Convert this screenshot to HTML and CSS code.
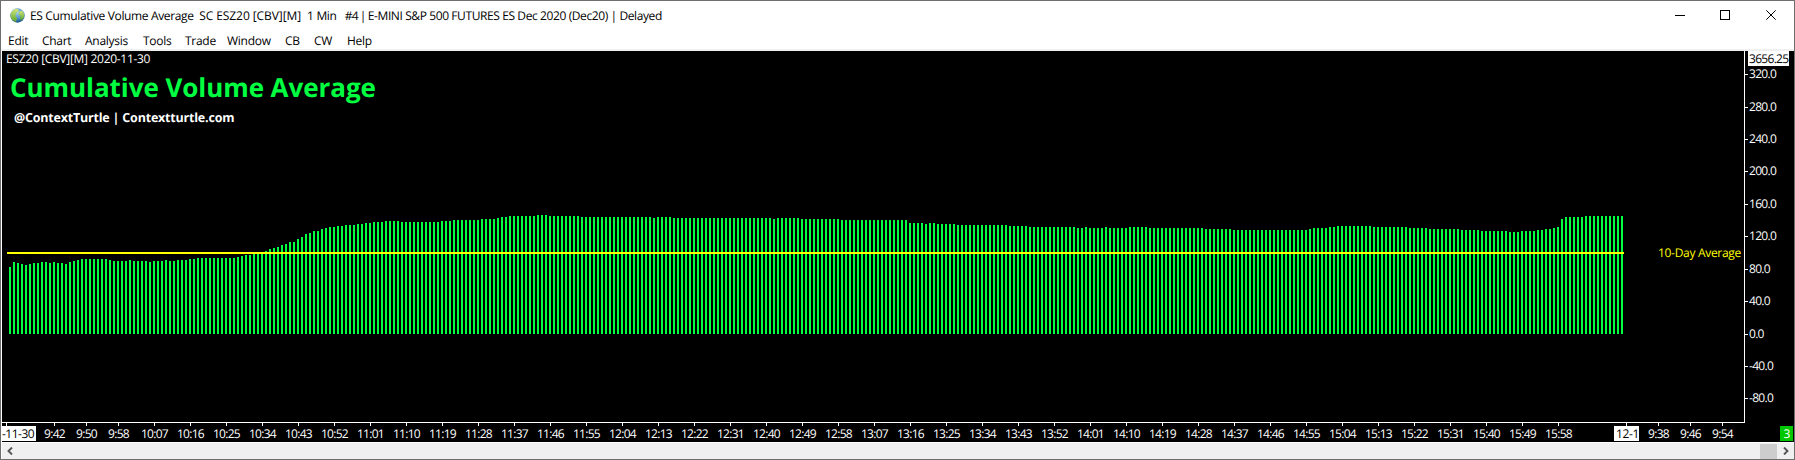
FILE: index.html
```
<!DOCTYPE html>
<html lang="en">
<head>
<meta charset="utf-8">
<title>ES Cumulative Volume Average</title>
<link rel="stylesheet" href="styles.css">
</head>
<body>
<div class="window">
  <header class="titlebar">
    <svg class="globe" width="15" height="15" viewBox="0 0 15 15">
      <defs>
        <radialGradient id="sea" cx=".5" cy=".3" r=".7">
          <stop offset="0" stop-color="#a6d0ea"/><stop offset=".6" stop-color="#4a90c4"/><stop offset="1" stop-color="#164f80"/>
        </radialGradient>
        <linearGradient id="land" x1="0" y1="0" x2="0" y2="1">
          <stop offset="0" stop-color="#d3e67c"/><stop offset="1" stop-color="#5aa52c"/>
        </linearGradient>
      </defs>
      <circle cx="7.5" cy="7.5" r="7.2" fill="url(#sea)"/>
      <path d="M1 5Q3 1 7 .8L9 2 8 4 6 5 5.500 8 7 10 6 14Q1 12 .6 8Z" fill="url(#land)"/>
      <path d="M9 4L12 2.500 14 5.500 14 9 12 12 10 11 10.500 8 8.500 6.500Z" fill="url(#land)"/>
    </svg>
    <h1 class="caption">ES Cumulative Volume Average  <span class="contract">SC ESZ20 [CBV][M]  </span>1 Min   <span class="number">#4 | </span><span class="product">E-MINI S&amp;P 500 FUTURES ES Dec 2020 (Dec20) | Delayed</span></h1>
    <svg class="controls" width="103" height="11" viewBox="0 0 103 11" fill="none" stroke="#000">
      <path d="M0 5.500H10"/>
      <rect x="45.500" y=".5" width="9" height="9"/>
      <path d="M91.300 .3L100.700 9.700M100.700 .3L91.300 9.700"/>
    </svg>
  </header>
  <nav class="menu">
    <span>Edit</span><span>Chart</span><span>Analysis</span><span>Tools</span><span>Trade</span><span>Window</span><span>CB</span><span>CW</span><span>Help</span>
  </nav>
  <main class="chart">
    <section class="plot">
      <div class="symbol">ESZ20 [CBV][M] 2020-11-30</div>
      <h2 class="heading">Cumulative Volume Average</h2>
      <div class="credit">@ContextTurtle | Contextturtle.com</div>
      <div class="bars" id="bars"></div>
      <div class="average-line"></div>
      <div class="average-label">10-Day Average</div>
    </section>
    <aside class="scale" id="scale">
      <span class="last-price">3656.25</span>
    </aside>
    <div class="times" id="times">
      <span class="date first">-11-30</span>
      <span class="date second">12-1</span>
      <span class="badge">3</span>
    </div>
  </main>
  <footer class="scrollbar">
    <svg width="6" height="8" viewBox="0 0 6 8" fill="none" stroke="#555" stroke-width="1.900"><path d="M5 .5L1.500 4 5 7.500"/></svg>
    <span class="thumb"></span>
    <svg width="6" height="8" viewBox="0 0 6 8" fill="none" stroke="#555" stroke-width="1.900"><path d="M1 .5L4.500 4 1 7.500"/></svg>
  </footer>
</div>
<script src="chart.js"></script>
</body>
</html>
```
FILE: styles.css
```
* { box-sizing: border-box; }
body { margin: 0; background: #fff; overflow: hidden; }
.window {
  width: 1795px; height: 460px;
  display: grid; grid-template-rows: 30px 20px 391px 17px;
  border: 1px solid #6e6e6e;
  background: #fff; color: #000;
  font: 12px/16px "Open Sans", "Noto Sans", sans-serif;
  text-rendering: geometricPrecision;
}
.titlebar { display: flex; align-items: flex-start; padding: 7px 16px 0 9px; }
.globe { flex: none; margin-right: 5px; }
.caption { margin: 0; font-size: 12px; font-weight: 400; line-height: 16px; white-space: pre; flex: 1; letter-spacing: -.35px; }
.contract { letter-spacing: -.08px; }
.number { letter-spacing: -.9px; }
.product { letter-spacing: -.4px; }
.controls { flex: none; margin-top: 2px; }
.menu {
  display: grid; grid-template-columns: 34px 43px 58px 42px 42px 58px 29px 33px 60px;
  padding: 2px 0 0 7px; border-bottom: 2px solid #f0f0f0; line-height: 16px; letter-spacing: -.28px;
}
.chart {
  display: grid; grid-template: 372px 19px / 1743px 49px;
  margin-left: 1px; background: #000; color: #fff;
}
.plot { position: relative; border: solid #fff; border-width: 0 1px 1px 0; overflow: hidden; }
.symbol { padding-left: 4px; letter-spacing: -.3px; }
.heading { margin: 0; padding: 3px 0 0 8px; font: 700 26px/34px "Open Sans", sans-serif; letter-spacing: -.06px; color: #00ff40; white-space: nowrap; }
.credit { padding: 6px 0 0 12px; font-size: 12.5px; font-weight: 700; letter-spacing: -.2px; }
.bars { position: absolute; left: 7px; top: 83px; height: 200px; display: flex; align-items: flex-end; gap: 2px; }
.bar { flex: none; width: 2px; background: #00ff40; }
.average-line { position: absolute; left: 5px; top: 201px; width: 1617px; height: 2px; background: #ff0; }
.average-label { position: absolute; right: 3px; top: 194px; color: #ff0; letter-spacing: -.3px; }
.scale, .times { position: relative; letter-spacing: -.7px; white-space: nowrap; }
.last-price { position: absolute; left: 3px; top: 0; width: 41px; height: 15px; line-height: 15px; padding-left: 1px; background: #fff; color: #000; }
.price { position: absolute; left: 4px; margin-top: -8px; line-height: 16px; }
.price::before { content: ""; position: absolute; left: -4px; top: 8px; width: 3px; height: 1px; background: #fff; }
.times { grid-column: 1 / 3; }
.tick { position: absolute; top: 0; width: 1px; height: 3px; background: #fff; }
.time { position: absolute; top: 3px; width: 40px; margin-left: -19.5px; text-align: center; line-height: 15px; }
.date { position: absolute; top: 3px; height: 15px; line-height: 15px; background: #fff; color: #000; letter-spacing: -.35px; }
.first { left: 0; width: 34px; letter-spacing: -.5px; }
.second { left: 1612px; width: 25px; padding-left: 2px; }
.badge { position: absolute; right: 1px; top: 3px; width: 13px; height: 15px; line-height: 15px; text-align: center; background: #00c800; }
.scrollbar { display: flex; align-items: center; background: #f0f0f0; padding: 0 5px; margin-left: 1px; border-top: 1px solid #fff; }
.thumb { width: 17px; height: 15px; margin: 0 6px 0 auto; background: #cdcdcd; }
```
FILE: chart.js
```
// Bar heights in pixels, stored as [height, run length].
const runs = [
  [67,1],[72,1],[71,1],[70,1],[69,1],[70,1],[71,2],[72,2],[71,1],[72,1],[71,2],[70,1],[72,1],[73,1],[74,1],
  [75,7],[74,1],[73,4],[74,1],[73,4],[72,1],[73,3],[74,1],[73,2],[74,3],[75,2],[76,10],[77,1],[78,1],[79,2],
  [80,1],[81,2],[83,1],[85,1],[86,1],[87,1],[89,1],[90,1],[92,2],[95,1],[97,1],[100,1],[101,1],[103,2],[105,1],
  [106,1],[107,2],[108,2],[109,3],[110,2],[111,2],[112,3],[113,4],[112,10],[113,3],[114,7],[115,4],[116,1],
  [117,2],[118,7],[119,3],[118,8],[117,18],[116,1],[117,4],[116,25],[115,1],[116,6],[115,10],[114,17],
  [111,4],[110,1],[111,2],[110,5],[109,13],[108,5],[107,12],[106,2],[107,1],[106,4],[107,1],[106,5],[107,5],
  [106,14],[105,7],[104,19],[105,1],[106,4],[107,2],[108,9],[107,9],[106,5],[105,8],[104,5],[103,7],[102,3],
  [103,4],[104,2],[105,2],[106,1],[107,1],[115,1],[117,5],[118,10]
];

function add(parent, className, style, text = '') {
  const el = document.createElement('span');
  el.className = className;
  Object.assign(el.style, style);
  el.textContent = text;
  parent.append(el);
}

const bars = document.getElementById('bars');
for (const [height, count] of runs) {
  for (let i = 0; i < count; i++) add(bars, 'bar', { height: height + 'px' });
}

const scale = document.getElementById('scale');
const levels = [[320,23],[280,56],[240,88],[200,120],[160,153],[120,185],[80,218],[40,250],[0,283],[-40,315],[-80,347]];
for (const [value, y] of levels) add(scale, 'price', { top: y + 'px' }, value.toFixed(1));

const times = document.getElementById('times');
const marks = [[52,'9:42'],[84,'9:50'],[116,'9:58'],[1656,'9:38'],[1688,'9:46'],[1720,'9:54']];
for (let i = 0; i < 40; i++) {
  const minute = 607 + i * 9;
  marks.push([152 + i * 36, Math.floor(minute / 60) + ':' + String(minute % 60).padStart(2, '0')]);
}
for (const [x, label] of marks) {
  add(times, 'tick', { left: x + 'px' });
  add(times, 'time', { left: x + 'px' }, label);
}
for (const x of [4, 1624]) add(times, 'tick', { left: x + 'px' });
```
